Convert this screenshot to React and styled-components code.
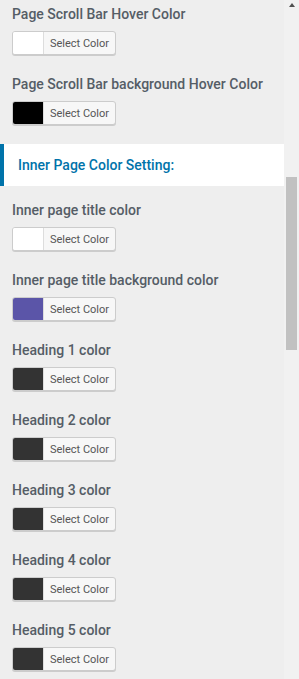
import React from 'react'
import styled, {createGlobalStyle} from 'styled-components'

const GlobalStyle = createGlobalStyle`
  html, body {
    margin: 0;
    padding: 0;
    background: #eeeeee;
    font-family: Roboto, "Noto Sans", "Liberation Sans", sans-serif;
    overflow: hidden;
  }
`

const Frame = styled.div`
  display: flex;
  width: 299px;
  height: 679px;
  overflow: hidden;
`

const Panel = styled.div`
  flex: 1;
  display: flex;
  flex-direction: column;
  background: #eeeeee;
  padding-top: 4px;

  & > * {
    flex-shrink: 0;
  }
`

const Field = styled.div`
  display: flex;
  flex-direction: column;
  align-items: flex-start;
  padding: 0 12px;
  margin-bottom: 19px;
`

const Label = styled.div`
  font-size: 14px;
  line-height: 20px;
  font-weight: 500;
  color: #555d66;
  margin-bottom: 7px;
  white-space: nowrap;
`

const ColorButton = styled.div`
  display: flex;
  height: 24px;
  width: 104px;
  box-sizing: border-box;
  border: 1px solid #cccccc;
  border-radius: 3px;
  box-shadow: 0 1px 0 #cccccc;
  background: #f7f7f7;
  overflow: hidden;
`

const Swatch = styled.span`
  width: 30px;
  background: ${props => props.color};
  border-right: 1px solid #dddddd;
`

const ButtonText = styled.span`
  flex: 1;
  display: flex;
  align-items: center;
  justify-content: center;
  font-size: 11px;
  color: #555555;
`

const Section = styled.div`
  display: flex;
  align-items: center;
  height: 42px;
  background: #ffffff;
  border-left: 4px solid #0073aa;
  padding-left: 14px;
  margin-bottom: 14px;
  font-size: 14px;
  font-weight: 500;
  color: #0073aa;
`

const Track = styled.div`
  width: 15px;
  background: #f1f1f1;
  display: flex;
  flex-direction: column;
  align-items: center;
  padding-top: 3px;
`

const Arrow = styled.div`
  width: 0;
  height: 0;
  border-left: 3.5px solid transparent;
  border-right: 3.5px solid transparent;
  border-bottom: 4px solid #505050;
`

const Thumb = styled.div`
  width: 11px;
  height: ${props => props.size}px;
  margin-top: ${props => props.offset}px;
  background: #c1c1c1;
`

const ColorField = ({label, color}) => (
  <Field>
    <Label>{label}</Label>
    <ColorButton>
      <Swatch color={color}/>
      <ButtonText>Select Color</ButtonText>
    </ColorButton>
  </Field>
)

const scrollFields = [
  {label: 'Page Scroll Bar Hover Color', color: '#ffffff'},
  {label: 'Page Scroll Bar background Hover Color', color: '#000000'},
]

const innerFields = [
  {label: 'Inner page title color', color: '#ffffff'},
  {label: 'Inner page title background color', color: '#5b55a8'},
  {label: 'Heading 1 color', color: '#333333'},
  {label: 'Heading 2 color', color: '#333333'},
  {label: 'Heading 3 color', color: '#333333'},
  {label: 'Heading 4 color', color: '#333333'},
  {label: 'Heading 5 color', color: '#333333'},
]

export default function App() {
  return (
    <>
      <GlobalStyle/>
      <Frame>
        <Panel>
          {scrollFields.map(f => <ColorField key={f.label} {...f}/>)}
          <Section>Inner Page Color Setting:</Section>
          {innerFields.map(f => <ColorField key={f.label} {...f}/>)}
        </Panel>
        <Track>
          <Arrow/>
          <Thumb offset={170} size={173}/>
        </Track>
      </Frame>
    </>
  )
}
